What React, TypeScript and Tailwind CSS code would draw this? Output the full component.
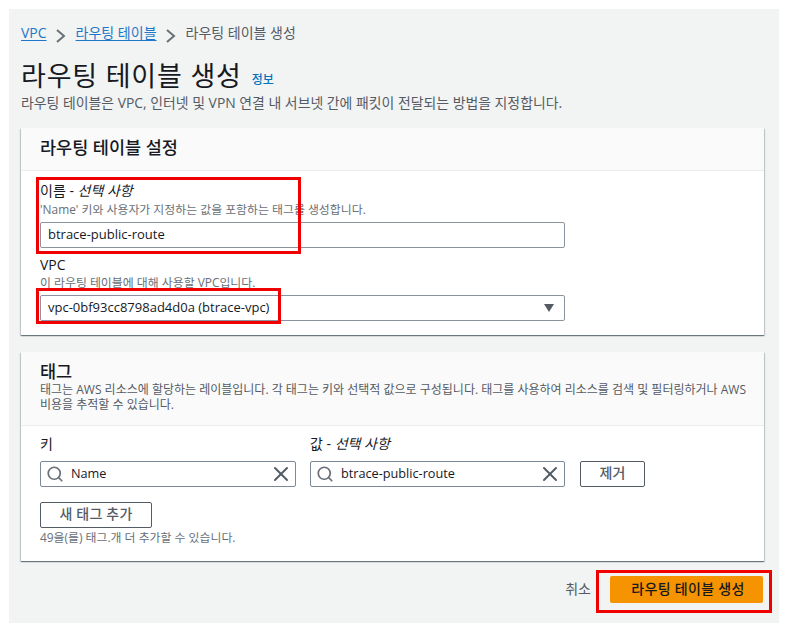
import { Search, X } from "lucide-react";

const FF = "font-['Open_Sans','Noto_Sans_CJK_KR',sans-serif]";
const CARD = "bg-white shadow-[0_1px_1px_0_rgba(0,28,36,0.4),1px_1px_1px_0_rgba(0,28,36,0.15),-1px_1px_1px_0_rgba(0,28,36,0.15)]";

function Red({ cls }: { cls: string }) {
  return <div className={`absolute border-[3px] border-[#f00000] pointer-events-none ${cls}`} />;
}

function Chevron() {
  return (
    <svg width="10" height="14" viewBox="0 0 10 14" fill="none" className="ml-[9px] mr-[10px] mt-[6px] shrink-0">
      <polyline points="1,1 8,7 1,13" stroke="#687078" strokeWidth="2" />
    </svg>
  );
}

function TagInput({ value, width }: { value: string; width: string }) {
  return (
    <div className={`${width} h-[26px] flex items-center border border-[#7d8998] rounded-[2px] bg-white pl-[5px] pr-[2px]`}>
      <Search size={18} strokeWidth={2.3} className="text-[#687078] shrink-0" />
      <span className="ml-[7px] text-[12.7px] text-[#16191f] flex-1">{value}</span>
      <X size={24} strokeWidth={2} className="text-[#545b64] shrink-0" />
    </div>
  );
}

export default function App() {
  return (
    <div className={`relative w-[791px] h-[634px] bg-white pt-[9px] pl-[9px] pr-[12px] pb-[11px] ${FF}`}>
      <div className="h-full bg-[#f2f3f3] pl-[12px] pr-[15px] flex flex-col">
        <div className="h-[48px] pt-[14px] flex items-start text-[14px] leading-[20px]">
          <a className="text-[#1f77c9] underline underline-offset-2">VPC</a>
          <Chevron />
          <a className="text-[#1f77c9] underline underline-offset-2">라우팅 테이블</a>
          <Chevron />
          <span className="text-[#545b64]">라우팅 테이블 생성</span>
        </div>
        <div className="flex items-end h-[36px]">
          <h1 className="text-[27px] leading-[36px] text-[#16191f] tracking-[0.8px] translate-y-[1px]">라우팅 테이블 생성</h1>
          <a className="ml-[10px] mb-[4px] text-[12px] font-medium text-[#0073bb]">정보</a>
        </div>
        <p className="mt-[1px] text-[13.9px] leading-[18px] text-[#545b64] whitespace-nowrap">
          라우팅 테이블은 VPC, 인터넷 및 VPN 연결 내 서브넷 간에 패킷이 전달되는 방법을 지정합니다.
        </p>

        <section className={`mt-[16px] h-[207px] ${CARD}`}>
          <div className="h-[43px] bg-[#fafafa] border-b border-[#eaeded] pl-[19px] flex items-center pb-[4px]">
            <h2 className="text-[17.5px] font-medium text-[#16191f]">라우팅 테이블 설정</h2>
          </div>
          <div className="pl-[19px] pr-[199px] pt-[11px]">
            <label className="block text-[14px] leading-[18px] text-[#16191f]">
              이름 - <i>선택 사항</i>
            </label>
            <p className="mt-[2px] text-[11.9px] leading-[14px] text-[#687078] whitespace-nowrap">
              'Name' 키와 사용자가 지정하는 값을 포함하는 태그를 생성합니다.
            </p>
            <div className="mt-[6px] h-[26px] border border-[#8b949e] rounded-[2px] px-[7px] flex items-center text-[13px] text-[#16191f]">
              btrace-public-route
            </div>
            <label className="block mt-[8px] text-[14px] leading-[18px] text-[#16191f]">VPC</label>
            <p className="mt-[1px] text-[11.9px] leading-[14px] text-[#687078]">이 라우팅 테이블에 대해 사용할 VPC입니다.</p>
            <div className="mt-[6px] h-[26px] border border-[#8b949e] rounded-[2px] pl-[7px] pr-[10px] flex items-center justify-between text-[13px] text-[#16191f]">
              <span>vpc-0bf93cc8798ad4d0a (btrace-vpc)</span>
              <span className="w-0 h-0 border-l-[5px] border-r-[5px] border-t-[8px] border-l-transparent border-r-transparent border-t-[#545b64]" />
            </div>
          </div>
        </section>

        <section className={`mt-[17px] h-[209px] ${CARD}`}>
          <div className="h-[74px] bg-[#fafafa] border-b border-[#eaeded] pl-[19px] pr-[15px] pt-[8px]">
            <h2 className="text-[17.5px] leading-[22px] font-medium text-[#16191f]">태그</h2>
            <p className="text-[12px] leading-[15px] text-[#545b64]">
              태그는 AWS 리소스에 할당하는 레이블입니다. 각 태그는 키와 선택적 값으로 구성됩니다. 태그를 사용하여 리소스를 검색 및 필터링하거나 AWS 비용을 추적할 수 있습니다.
            </p>
          </div>
          <div className="pl-[19px] pt-[9px]">
            <div className="flex gap-[14px] text-[14px] leading-[18px] text-[#16191f]">
              <span className="w-[256px]">키</span>
              <span>값 - <i>선택 사항</i></span>
            </div>
            <div className="mt-[8px] flex gap-[14px] items-center">
              <TagInput value="Name" width="w-[256px]" />
              <TagInput value="btrace-public-route" width="w-[255px]" />
              <button className="ml-[1px] w-[65px] h-[26px] border border-[#545b64] rounded-[2px] text-[14px] font-medium text-[#545b64] pb-[4px]">제거</button>
            </div>
            <button className="mt-[15px] block w-[112px] h-[26px] border border-[#545b64] rounded-[2px] text-[14px] font-medium text-[#545b64] pb-[4px] tracking-[0.2px]">새 태그 추가</button>
            <p className="mt-[2px] text-[11.9px] leading-[14px] text-[#687078]">49을(를) 태그.개 더 추가할 수 있습니다.</p>
          </div>
        </section>

        <div className="mt-[15px] flex items-center justify-end">
          <span className="text-[14px] text-[#545b64] -translate-y-[1px]">취소</span>
          <button className="ml-[19px] w-[153px] h-[27px] bg-[#f59300] rounded-[2px] text-[14px] font-medium text-[#16191f] mr-[1px] pb-[3px] pl-[3px] tracking-[0.3px]">라우팅 테이블 생성</button>
        </div>
      </div>
      <Red cls="left-[36px] top-[177px] w-[265px] h-[77px]" />
      <Red cls="left-[36px] top-[288px] w-[245px] h-[36px]" />
      <Red cls="left-[596px] top-[570px] w-[176px] h-[43px]" />
    </div>
  );
}
